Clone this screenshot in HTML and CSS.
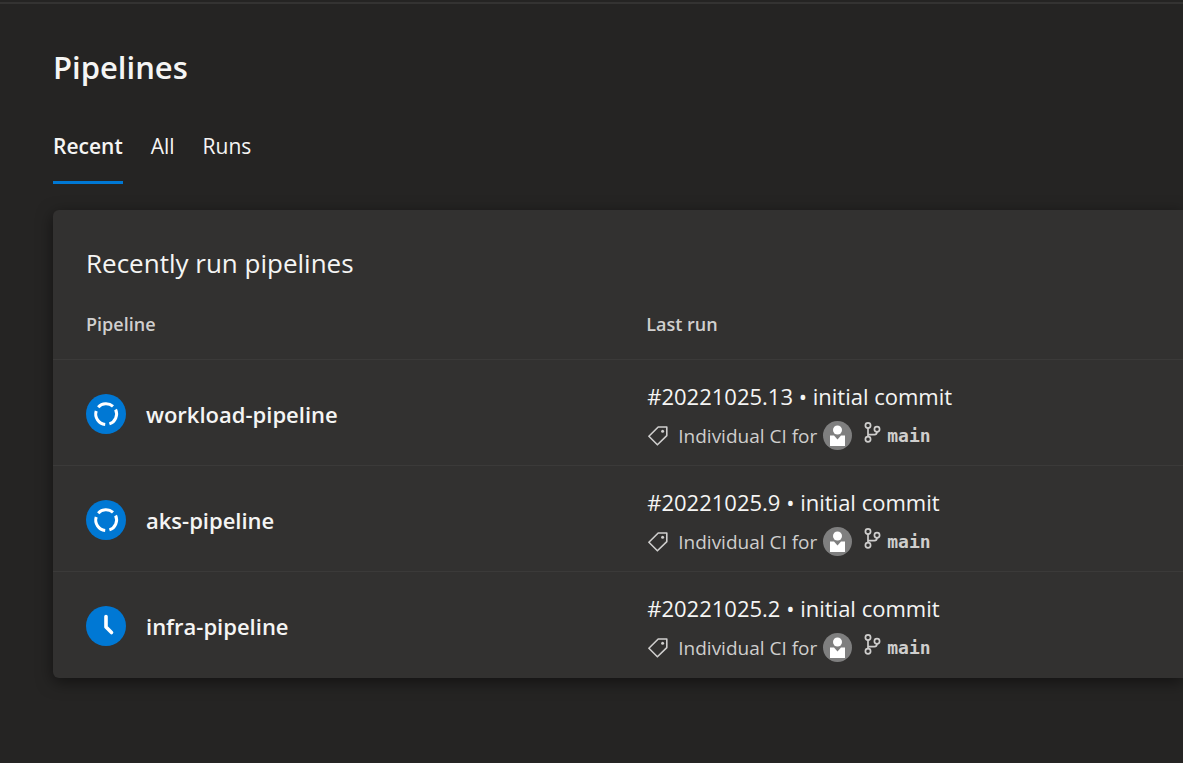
FILE: index.html
```html
<!DOCTYPE html>
<html lang="en">
<head>
<meta charset="utf-8">
<meta name="viewport" content="width=device-width, initial-scale=1">
<title>Pipelines</title>
<link rel="stylesheet" href="styles.css">
</head>
<body>
<svg class="sprite" aria-hidden="true">
  <symbol id="running" viewBox="0 0 40 40">
    <circle cx="20" cy="20" r="20" fill="#0078d4"/>
    <g fill="none" stroke="#fff" stroke-width="3">
      <path d="M12.2 13.2A10.500 10.500 0 0 1 27 12.400"/>
      <path d="M29.600 15.500A10.500 10.500 0 0 1 23.400 29.900"/>
      <path d="M19.200 30.500A10.500 10.500 0 0 1 10.200 17"/>
    </g>
  </symbol>
  <symbol id="waiting" viewBox="0 0 40 40">
    <circle cx="20" cy="20" r="20" fill="#0078d4"/>
    <path d="M20 10.5V21L25.5 26.5" fill="none" stroke="#fff" stroke-width="3.6" stroke-linecap="round" stroke-linejoin="round"/>
  </symbol>
  <symbol id="tag" viewBox="0 0 20 20">
    <path d="M.9 10.2 10.2 1H18.8V9.6L9.4 18.8Z" fill="none" stroke="currentColor" stroke-width="1.6" stroke-linejoin="round"/>
    <circle cx="14.6" cy="5.2" r="1.5" fill="currentColor"/>
  </symbol>
  <symbol id="avatar" viewBox="0 0 29 29">
    <circle cx="14.5" cy="14.5" r="14.5" fill="#7f7f7f"/>
    <circle cx="14.5" cy="9" r="4.5" fill="#fff"/>
    <path d="M7 14.5H11L14.5 18.500 18 14.5H22V25H7Z" fill="#fff"/>
  </symbol>
  <symbol id="branch" viewBox="0 0 17 21">
    <g fill="none" stroke="currentColor" stroke-width="1.7">
      <circle cx="4" cy="3.5" r="2.6"/>
      <circle cx="4" cy="17.3" r="2.6"/>
      <circle cx="13" cy="7.2" r="2.6"/>
      <path d="M4 6.1V14.7M4 12.6H10.5Q13 12.6 13 9.8"/>
    </g>
  </symbol>
</svg>
<main class="page">
  <h1 class="title">Pipelines</h1>
  <nav class="tabs" aria-label="Pipeline views">
    <a class="tab tab-active" href="#recent" aria-current="page">Recent</a>
    <a class="tab" href="#all">All</a>
    <a class="tab" href="#runs">Runs</a>
  </nav>
  <section class="card" id="recent">
    <h2 class="card-title">Recently run pipelines</h2>
    <table class="runs">
      <thead>
        <tr><th class="col-name" scope="col">Pipeline</th><th scope="col">Last run</th></tr>
      </thead>
      <tbody>
        <tr>
          <td><a class="pipeline" href="#workload"><svg class="status"><use href="#running"/></svg>workload-pipeline</a></td>
          <td>
            <a class="run" href="#run13">#20221025.13 • initial commit</a>
            <div class="meta"><svg class="tag"><use href="#tag"/></svg><span>Individual CI for</span><svg class="avatar"><use href="#avatar"/></svg><svg class="branch"><use href="#branch"/></svg><span class="ref">main</span></div>
          </td>
        </tr>
        <tr>
          <td><a class="pipeline" href="#aks"><svg class="status"><use href="#running"/></svg>aks-pipeline</a></td>
          <td>
            <a class="run" href="#run9">#20221025.9 • initial commit</a>
            <div class="meta"><svg class="tag"><use href="#tag"/></svg><span>Individual CI for</span><svg class="avatar"><use href="#avatar"/></svg><svg class="branch"><use href="#branch"/></svg><span class="ref">main</span></div>
          </td>
        </tr>
        <tr>
          <td><a class="pipeline" href="#infra"><svg class="status"><use href="#waiting"/></svg>infra-pipeline</a></td>
          <td>
            <a class="run" href="#run2">#20221025.2 • initial commit</a>
            <div class="meta"><svg class="tag"><use href="#tag"/></svg><span>Individual CI for</span><svg class="avatar"><use href="#avatar"/></svg><svg class="branch"><use href="#branch"/></svg><span class="ref">main</span></div>
          </td>
        </tr>
      </tbody>
    </table>
  </section>
</main>
</body>
</html>
```
FILE: styles.css
```css
* {
  box-sizing: border-box;
}

body {
  margin: 0;
  min-height: 100vh;
  background: #252423;
  color: #f5f5f4;
  font-family: "Segoe UI", "Open Sans", "Noto Sans", sans-serif;
  font-size: 22px;
}

a {
  color: inherit;
  text-decoration: none;
}

.sprite {
  display: none;
}

.page {
  border-top: 2px solid #343332;
  margin-top: 2px;
  padding: 40px 0 40px 53px;
}

.title {
  margin: 0;
  font-size: 31px;
  line-height: 46px;
  font-weight: 600;
}

.tabs {
  display: flex;
  gap: 28px;
  margin-top: 32px;
  font-size: 21px;
}

.tab {
  padding: 8px 0 19px;
  line-height: 32px;
  border-bottom: 3px solid transparent;
}

.tab-active {
  font-weight: 600;
  border-bottom-color: #0078d4;
}

.card {
  margin-top: 26px;
  padding-top: 32px;
  background: #323130;
  border-radius: 6px 0 0 6px;
  box-shadow: 0 4px 16px rgba(0, 0, 0, 0.5);
}

.card-title {
  margin: 0;
  padding-left: 33px;
  font-size: 26px;
  line-height: 42px;
  font-weight: 400;
}

.runs {
  width: 100%;
  table-layout: fixed;
  border-collapse: collapse;
  text-align: left;
}

.runs th {
  padding: 20px 0 15px;
  color: #d0cfce;
  font-size: 18px;
  line-height: 40px;
  font-weight: 600;
}

.runs td {
  height: 106px;
  padding: 6px 0 0;
  border-top: 1px solid #3b3a39;
}

.runs td:first-child {
  padding-top: 2px;
}

.runs th:first-child,
.runs td:first-child {
  padding-left: 33px;
}

.col-name {
  width: 52.5%;
}

.pipeline {
  display: flex;
  align-items: center;
  gap: 20px;
  font-weight: 600;
}

.status {
  width: 40px;
  height: 40px;
}

.run {
  display: block;
  padding-left: 1px;
  line-height: 40px;
}

.meta {
  display: flex;
  align-items: center;
  padding-left: 1px;
  line-height: 40px;
  font-size: 19px;
  color: #cfcecd;
}

.tag {
  width: 20px;
  height: 20px;
  margin: 0 10px 0 1px;
}

.avatar {
  width: 29px;
  height: 29px;
  margin: 0 12px 0 6px;
}

.branch {
  width: 17px;
  height: 21px;
  margin: 0 6px 6px 0;
}

.ref {
  font-family: Consolas, "DejaVu Sans Mono", monospace;
  font-size: 18px;
  font-weight: 600;
}
```
